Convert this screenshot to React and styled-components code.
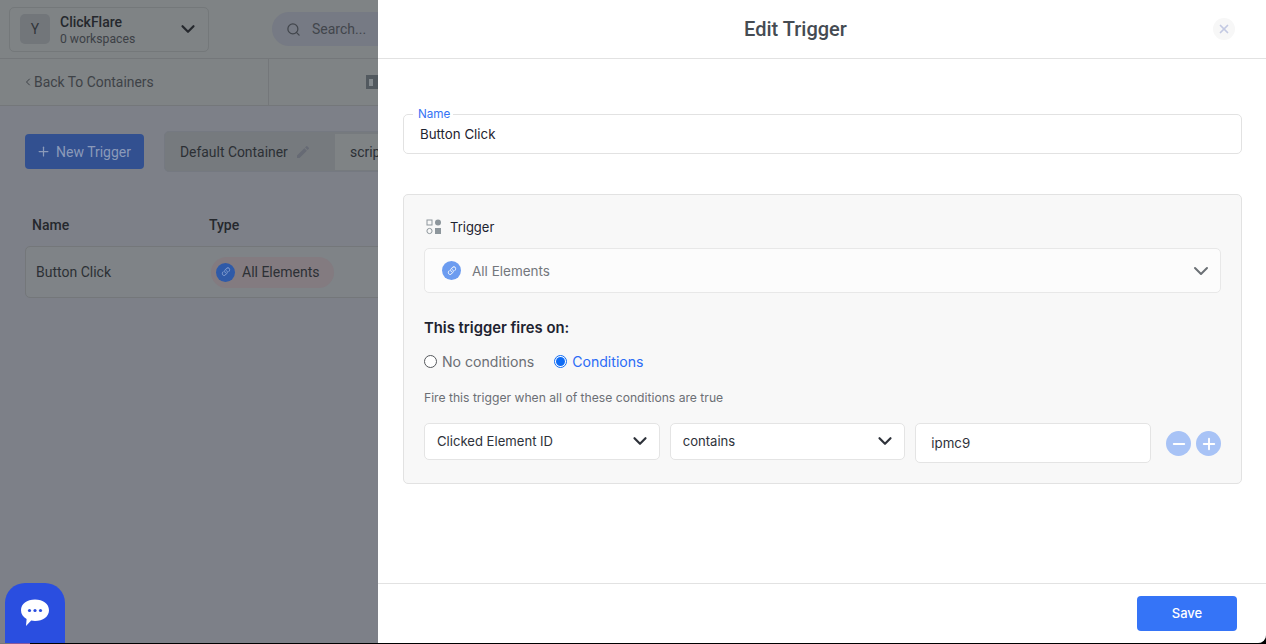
import React from "react";
import styled, { createGlobalStyle } from "styled-components";
import { FiChevronDown, FiSearch, FiChevronLeft, FiPlus, FiMinus, FiX } from "react-icons/fi";
import { MdEdit } from "react-icons/md";
import { BsLink45Deg } from "react-icons/bs";

const GlobalStyle = createGlobalStyle`
  html, body { margin: 0; padding: 0; height: 100%; background: #000; overflow: hidden; }
  #root { height: 644px; }
  * { box-sizing: border-box; }
`;

const Screen = styled.div`
  position: relative;
  width: 1266px;
  height: 643px;
  background: #7d8088;
  font-family: Roboto, "Liberation Sans", sans-serif;
  overflow: hidden;
  border-bottom-right-radius: 8px;
`;

const DockEdge = styled.div`
  width: 30px;
  height: 1px;
  background: linear-gradient(90deg, #777 0 33%, #8a5a9a 33% 100%);
`;

const TopBar = styled.div`
  height: 59px;
  display: flex;
  align-items: center;
  padding: 0 9px;
  background: #7f8385;
  border-bottom: 1px solid #74777a;
`;

const WorkspaceBox = styled.div`
  width: 200px;
  height: 45px;
  display: flex;
  align-items: center;
  padding: 0 9px 0 10px;
  border: 1px solid #74787a;
  border-radius: 5px;
  color: #25282d;
`;

const Avatar = styled.div`
  width: 30px;
  height: 30px;
  border-radius: 5px;
  background: #72767a;
  color: #33373c;
  font-size: 14px;
  display: flex;
  align-items: center;
  justify-content: center;
  margin-right: 10px;
`;

const WorkspaceText = styled.div`
  flex: 1;
  padding-top: 3px;
  line-height: 15px;
  b { display: block; font-size: 14px; font-weight: 500; color: #25282d; }
  span { font-size: 12.2px; color: #3c4045; }
`;

const SearchPill = styled.div`
  margin-left: 63px;
  width: 200px;
  height: 34px;
  border-radius: 17px;
  background: #767a84;
  display: flex;
  align-items: center;
  padding-left: 14px;
  gap: 11px;
  font-size: 14px;
  color: #42464c;
`;

const SubBar = styled.div`
  height: 47px;
  display: flex;
  align-items: stretch;
  background: #7f8385;
  border-bottom: 1px solid #74777a;
`;

const BackLink = styled.div`
  width: 269px;
  display: flex;
  align-items: center;
  padding-left: 22px;
  font-size: 13.9px;
  color: #3e4247;
  border-right: 1px solid #74777a;
`;

const TabGlyph = styled.div`
  margin: 16px 0 0 97px;
  width: 14px;
  height: 14px;
  padding-left: 3px;
  background: #52595f;
  display: flex;
  align-items: center;
  &::before {
    content: "";
    width: 4px;
    height: 7px;
    background: #848a8e;
  }
`;

const Toolbar = styled.div`
  display: flex;
  align-items: center;
  padding: 25px 0 0 25px;
  gap: 20px;
`;

const NewButton = styled.div`
  width: 119px;
  height: 35px;
  display: flex;
  align-items: center;
  gap: 5px;
  padding-left: 11px;
  border-radius: 4px;
  background: #325090;
  color: #8b9ab9;
  font-size: 14px;
`;

const ContainerTabs = styled.div`
  display: flex;
  align-items: center;
  height: 41px;
  width: 300px;
  background: #767a7e;
  border: 1px solid #757981;
  border-radius: 5px;
  font-size: 13.9px;
  color: #2c3035;
`;

const ActiveContainer = styled.div`
  display: flex;
  align-items: center;
  gap: 7px;
  padding-left: 15px;
  width: 170px;
`;

const ScriptTab = styled.div`
  height: 36px;
  flex: 1;
  display: flex;
  align-items: center;
  padding-left: 15px;
  background: #7f8385;
`;

const TableHead = styled.div`
  display: flex;
  padding: 45px 0 0 32px;
  height: 74px;
  font-size: 14px;
  font-weight: 500;
  color: #25282d;
  span:first-child { width: 177px; }
`;

const TableRow = styled.div`
  margin-left: 25px;
  height: 52px;
  display: flex;
  align-items: center;
  padding-left: 10px;
  background: #7f8387;
  border: 1px solid #74777a;
  border-radius: 5px;
  font-size: 14px;
  color: #2c3035;
`;

const RowName = styled.div`
  width: 175px;
`;

const TypePill = styled.div`
  display: flex;
  align-items: center;
  gap: 7px;
  width: 123px;
  height: 31px;
  padding-left: 5px;
  border-radius: 16px;
  background: #837b80;
`;

const LinkDot = styled.span`
  width: 19px;
  height: 19px;
  border-radius: 50%;
  background: ${(p) => p.$bg};
  color: ${(p) => p.$fg};
  display: inline-flex;
  align-items: center;
  justify-content: center;
  flex: none;
`;

const ChatBubble = styled.div`
  position: absolute;
  left: 5px;
  bottom: 0;
  width: 60px;
  height: 60px;
  border-radius: 20px 20px 0 0;
  background: #2a4ee0;
  display: flex;
  align-items: center;
  justify-content: center;
`;

const Drawer = styled.div`
  position: absolute;
  top: 0;
  right: 0;
  bottom: 0;
  width: 888px;
  background: #fff;
  display: flex;
  flex-direction: column;
  font-family: Inter, "Liberation Sans", sans-serif;
  color: #1e2330;
`;

const DrawerHead = styled.div`
  position: relative;
  height: 59px;
  flex: none;
  display: flex;
  align-items: center;
  justify-content: center;
  padding-right: 53px;
  border-bottom: 1px solid #e2e2e2;
  font-family: Roboto, sans-serif;
  font-size: 20px;
  font-weight: 500;
  color: #454b52;
`;

const CloseButton = styled.div`
  position: absolute;
  left: 835px;
  top: 18px;
  width: 22px;
  height: 22px;
  border-radius: 50%;
  background: #f7f7f7;
  color: #c3c9e2;
  display: flex;
  align-items: center;
  justify-content: center;
`;

const DrawerBody = styled.div`
  flex: 1;
  padding: 55px 24px 0 25px;
`;

const NameField = styled.fieldset`
  margin: -7px 0 0;
  padding: 0 16px;
  height: 47px;
  border: 1px solid #e2e2e2;
  border-radius: 5px;
  font-size: 13.3px;
  line-height: 27px;
  legend {
    padding: 0 3px 0 5px;
    margin-left: -7px;
    font-size: 11.7px;
    line-height: 14px;
    color: #3573f5;
  }
`;

const TriggerSection = styled.div`
  margin-top: 40px;
  height: 290px;
  padding: 23px 20px 0 20px;
  background: #f8f8f8;
  border: 1px solid #e2e2e2;
  border-radius: 5px;
`;

const SectionLabel = styled.div`
  display: flex;
  align-items: center;
  gap: 8px;
  height: 17px;
  padding-left: 2px;
  font-size: 13px;
`;

const TypeSelect = styled.div`
  margin-top: 13px;
  height: 45px;
  display: flex;
  align-items: center;
  gap: 11px;
  padding: 0 7px 0 17px;
  background: #fcfcfc;
  border: 1px solid #e8e8e8;
  border-radius: 5px;
  font-size: 13.5px;
  color: #74777c;
  > svg { margin-left: auto; color: #6b7075; }
`;

const FiresTitle = styled.div`
  margin-top: 26px;
  font-size: 14.8px;
  font-weight: 600;
  line-height: 18px;
`;

const RadioRow = styled.div`
  display: flex;
  gap: 20px;
  margin-top: 16px;
`;

const RadioOption = styled.label`
  display: flex;
  align-items: center;
  gap: 5px;
  font-size: 14.1px;
  line-height: 17px;
  color: ${(p) => (p.$on ? "#2c6cf6" : "#6c6f75")};
`;

const RadioMark = styled.span`
  width: 13px;
  height: 13px;
  border-radius: 50%;
  background: #fff;
  border: ${(p) => (p.$on ? "1px solid #0f6cf5" : "1px solid #55585c")};
  display: flex;
  align-items: center;
  justify-content: center;
  &::after {
    content: "";
    display: ${(p) => (p.$on ? "block" : "none")};
    width: 9px;
    height: 9px;
    border-radius: 50%;
    background: #0f6cf5;
  }
`;

const HelpText = styled.div`
  margin-top: 20px;
  font-size: 12.15px;
  line-height: 15px;
  color: #6c6f75;
`;

const ConditionRow = styled.div`
  display: flex;
  align-items: flex-start;
  gap: 10px;
  margin-top: 18px;
`;

const ConditionSelect = styled.div`
  width: 236px;
  height: 37px;
  display: flex;
  align-items: center;
  justify-content: space-between;
  padding: 0 8px 1px 12px;
  background: #fff;
  border: 1px solid #e4e4e4;
  border-radius: 5px;
  font-size: 13.1px;
  color: #2e323a;
`;

const ConditionInput = styled.div`
  width: 236px;
  height: 40px;
  display: flex;
  align-items: center;
  padding-left: 15px;
  background: #fff;
  border: 1px solid #e4e4e4;
  border-radius: 5px;
  font-size: 13.3px;
  color: #2e323a;
`;

const RoundButtons = styled.div`
  display: flex;
  gap: 5px;
  margin: 8px 0 0 5px;
`;

const RoundButton = styled.div`
  width: 25px;
  height: 25px;
  border-radius: 50%;
  background: #a8c3f6;
  color: #fff;
  display: flex;
  align-items: center;
  justify-content: center;
`;

const DrawerFoot = styled.div`
  height: 60px;
  flex: none;
  display: flex;
  align-items: center;
  justify-content: flex-end;
  padding: 0 29px 0 0;
  border-top: 1px solid #e2e2e2;
`;

const SaveButton = styled.button`
  width: 100px;
  height: 35px;
  border: none;
  border-radius: 4px;
  padding-bottom: 2px;
  background: #3574f7;
  color: #fff;
  font-family: Inter, sans-serif;
  font-size: 13px;
  font-weight: 500;
`;

function TriggerIcon() {
  return (
    <svg width="16" height="16" viewBox="0 0 16 16">
      <rect x="1" y="1" width="5" height="5" fill="none" stroke="#8d969c" />
      <circle cx="12" cy="3.5" r="3" fill="#8d969c" />
      <circle cx="3.5" cy="12" r="2.6" fill="none" stroke="#8d969c" />
      <rect x="9" y="9" width="6" height="6" fill="#8d969c" />
    </svg>
  );
}

function ChatIcon() {
  return (
    <svg width="30" height="30" viewBox="0 0 30 30">
      <path d="M15 1.5c8 0 14 4.4 14 10.7S23 23 15 23c-1.300 0-2.600-.1-3.800-.4L6 28l.6-7.100C3 19 1 16 1 12.200 1 5.900 7 1.500 15 1.500z" fill="#fff" />
      <circle cx="9.500" cy="12.500" r="1.600" fill="#2a4ee0" />
      <circle cx="15" cy="12.500" r="1.600" fill="#2a4ee0" />
      <circle cx="20.500" cy="12.500" r="1.600" fill="#2a4ee0" />
    </svg>
  );
}

export default function App() {
  return (
    <>
      <GlobalStyle />
      <Screen>
        <TopBar>
          <WorkspaceBox>
            <Avatar>Y</Avatar>
            <WorkspaceText>
              <b>ClickFlare</b>
              <span>0 workspaces</span>
            </WorkspaceText>
            <FiChevronDown size={22} strokeWidth={2.4} />
          </WorkspaceBox>
          <SearchPill>
            <FiSearch size={15} />
            Search...
          </SearchPill>
        </TopBar>
        <SubBar>
          <BackLink>
            <FiChevronLeft size={12} />
            Back To Containers
          </BackLink>
          <TabGlyph />
        </SubBar>
        <Toolbar>
          <NewButton>
            <FiPlus size={15} />
            New Trigger
          </NewButton>
          <ContainerTabs>
            <ActiveContainer>
              Default Container
              <MdEdit size={16} color="#666a74" />
            </ActiveContainer>
            <ScriptTab>script</ScriptTab>
          </ContainerTabs>
        </Toolbar>
        <TableHead>
          <span>Name</span>
          <span>Type</span>
        </TableHead>
        <TableRow>
          <RowName>Button Click</RowName>
          <TypePill>
            <LinkDot $bg="#2f5aa8" $fg="#8aa3d2">
              <BsLink45Deg size={12} />
            </LinkDot>
            All Elements
          </TypePill>
        </TableRow>
        <ChatBubble>
          <ChatIcon />
        </ChatBubble>

        <Drawer>
          <DrawerHead>
            Edit Trigger
            <CloseButton>
              <FiX size={14} strokeWidth={3} />
            </CloseButton>
          </DrawerHead>
          <DrawerBody>
            <NameField>
              <legend>Name</legend>
              Button Click
            </NameField>
            <TriggerSection>
              <SectionLabel>
                <TriggerIcon />
                Trigger
              </SectionLabel>
              <TypeSelect>
                <LinkDot $bg="#6c9cf0" $fg="#fff">
                  <BsLink45Deg size={12} />
                </LinkDot>
                All Elements
                <FiChevronDown size={24} />
              </TypeSelect>
              <FiresTitle>This trigger fires on:</FiresTitle>
              <RadioRow>
                <RadioOption>
                  <RadioMark />
                  No conditions
                </RadioOption>
                <RadioOption $on>
                  <RadioMark $on />
                  Conditions
                </RadioOption>
              </RadioRow>
              <HelpText>Fire this trigger when all of these conditions are true</HelpText>
              <ConditionRow>
                <ConditionSelect>
                  Clicked Element ID
                  <FiChevronDown size={22} strokeWidth={2.4} />
                </ConditionSelect>
                <ConditionSelect>
                  contains
                  <FiChevronDown size={22} strokeWidth={2.4} />
                </ConditionSelect>
                <ConditionInput>ipmc9</ConditionInput>
                <RoundButtons>
                  <RoundButton>
                    <FiMinus size={18} strokeWidth={2.500} />
                  </RoundButton>
                  <RoundButton>
                    <FiPlus size={18} strokeWidth={2.500} />
                  </RoundButton>
                </RoundButtons>
              </ConditionRow>
            </TriggerSection>
          </DrawerBody>
          <DrawerFoot>
            <SaveButton>Save</SaveButton>
          </DrawerFoot>
        </Drawer>
      </Screen>
      <DockEdge />
    </>
  );
}
